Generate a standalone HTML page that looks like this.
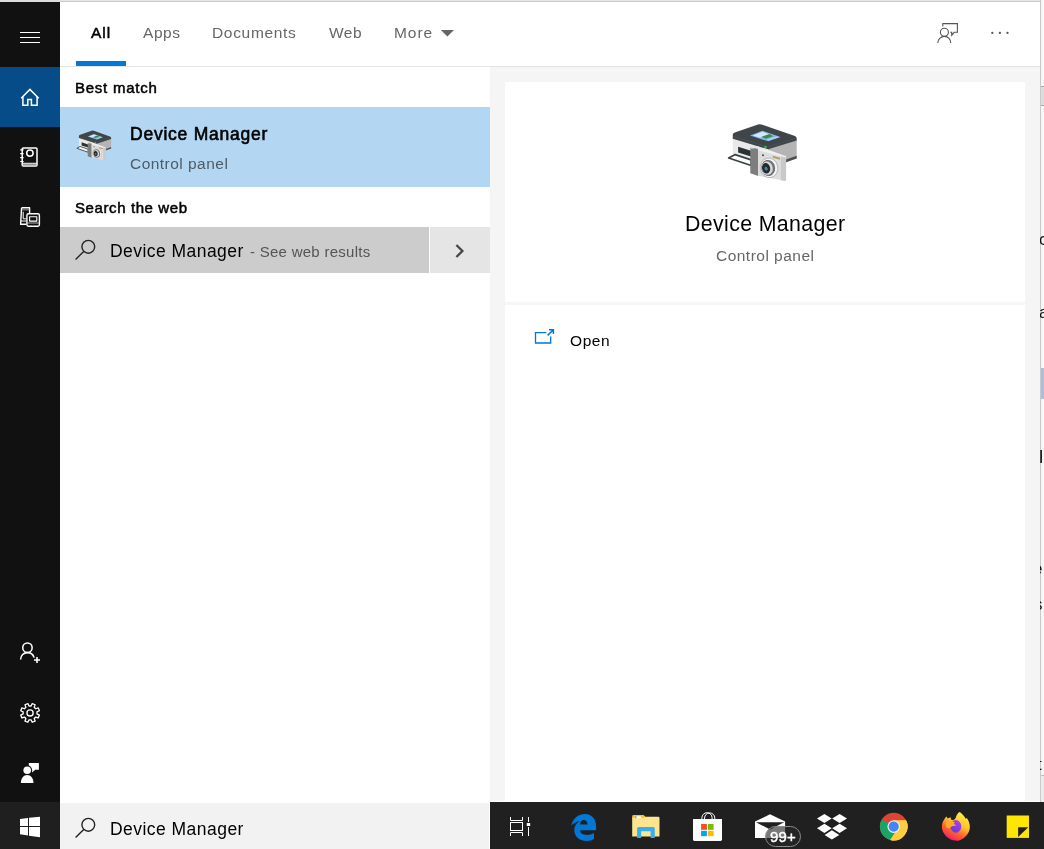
<!DOCTYPE html>
<html lang="en">
<head>
<meta charset="utf-8">
<title>Search - Device Manager</title>
<style>
*{box-sizing:border-box;margin:0;padding:0}
html,body{width:1044px;height:849px;overflow:hidden;background:#fff;font-family:"Liberation Sans",sans-serif;}
body{position:relative}
.b{position:absolute}
.t{position:absolute;white-space:nowrap;line-height:20px;height:20px;color:#000;will-change:transform}
.sb{font-weight:bold}
.sw{-webkit-text-stroke:0.45px #fff}
.sm{-webkit-text-stroke:0.5px #000}
.g{color:#666}
#icons{position:absolute;left:0;top:0;width:1044px;height:849px;pointer-events:none}
#edge{position:absolute;left:1040px;top:0;width:4px;height:802px;overflow:hidden;background:#f6f6f6}
#edge .t{font-size:17px;color:#111}
</style>
</head>
<body>
<!-- window chrome -->
<div class="b" style="left:0;top:0;width:60px;height:2px;background:#dcdcdc"></div>
<div class="b" style="left:60px;top:0;width:980px;height:1px;background:#e6e6e6"></div>
<div class="b" style="left:60px;top:1px;width:980px;height:1px;background:#cacaca"></div>
<!-- sidebar -->
<div class="b" style="left:0;top:2px;width:60px;height:800px;background:#111111"></div>
<div class="b" style="left:0;top:67px;width:60px;height:60px;background:#054c88"></div>
<!-- header -->
<div class="b" style="left:60px;top:2px;width:980px;height:65px;background:#fff;border-bottom:1px solid #e4e4e4"></div>
<div class="b" style="left:76px;top:61px;width:50px;height:5px;background:#0078d7"></div>
<div class="t sm" id="t_all" style="left:91.0px;top:23px;font-size:15.5px;letter-spacing:1.0px">All</div>
<div class="t g" id="t_apps" style="left:142.8px;top:23px;font-size:15.5px;letter-spacing:0.54px">Apps</div>
<div class="t g" id="t_docs" style="left:211.8px;top:23px;font-size:15.5px;letter-spacing:0.68px">Documents</div>
<div class="t g" id="t_web" style="left:329.0px;top:23px;font-size:15.5px;letter-spacing:0.5px">Web</div>
<div class="t g" id="t_more" style="left:394.3px;top:23px;font-size:15.5px;letter-spacing:0.95px">More</div>
<!-- results list -->
<div class="b" style="left:60px;top:67px;width:430px;height:736px;background:#fff"></div>
<div class="t sm" id="t_best" style="left:75.4px;top:78px;font-size:15px;letter-spacing:0.75px">Best match</div>
<div class="b" style="left:60px;top:107px;width:430px;height:80px;background:#b3d7f3"></div>
<div class="t sm" id="t_dm1" style="left:130.0px;top:124px;font-size:17.5px;letter-spacing:0.76px;-webkit-text-stroke:0.6px #000">Device Manager</div>
<div class="t" id="t_cp1" style="left:129.6px;top:154px;font-size:15.5px;color:#4f5a64;letter-spacing:0.47px">Control panel</div>
<div class="t sm" id="t_stw" style="left:75.4px;top:198px;font-size:15px;letter-spacing:0.6px">Search the web</div>
<div class="b" style="left:60px;top:227px;width:369px;height:46px;background:#cccccc"></div>
<div class="b" style="left:430px;top:227px;width:60px;height:46px;background:#e5e5e5"></div>
<div class="t" id="t_dm2" style="left:110.2px;top:241px;font-size:17.5px;letter-spacing:0.45px">Device Manager</div>
<div class="t" id="t_swr" style="left:249.6px;top:242px;font-size:15px;color:#555;letter-spacing:0.27px">- See web results</div>
<!-- preview pane -->
<div class="b" style="left:490px;top:67px;width:550px;height:734px;background:#f5f5f5"></div>
<div class="b" style="left:505px;top:82px;width:520px;height:220px;background:#fff"></div>
<div class="b" style="left:505px;top:303px;width:520px;height:1px;background:#f8f8f8"></div>
<div class="b" style="left:505px;top:305px;width:520px;height:497px;background:#fff"></div>
<div class="t" id="t_dm3" style="left:685.2px;top:211px;font-size:21.33px;line-height:26px;height:26px;letter-spacing:0.37px">Device Manager</div>
<div class="t g" id="t_cp2" style="left:716.4px;top:246px;font-size:15.5px;letter-spacing:0.48px">Control panel</div>
<div class="t" id="t_open" style="left:569.8px;top:331px;font-size:15.5px;letter-spacing:0.59px">Open</div>
<!-- right edge of underlying window -->
<div class="b" style="left:1040px;top:0;width:4px;height:802px;background:#f6f6f6"></div>
<div id="edge">
<div class="b" style="left:0;top:0;width:1px;height:802px;background:#c9c9c9"></div>
<div class="b" style="left:1px;top:86px;width:3px;height:20px;background:#dcdcdc;border-top:1px solid #a8a8a8;border-bottom:1px solid #a8a8a8"></div>
<div class="b" style="left:1px;top:368px;width:3px;height:31px;background:#a9bfe2"></div>
<div class="b" style="left:1px;top:775px;width:3px;height:27px;background:#ececec;border-top:1px solid #bdbdbd"></div>
<div class="t" style="left:-1px;top:230px">c</div>
<div class="t" style="left:-1px;top:303px">a</div>
<div class="t" style="left:-1px;top:447px;font-size:19px">l</div>
<div class="t" style="left:-7px;top:559px">e</div>
<div class="t" style="left:-6px;top:595px">s</div>
<div class="t" style="left:-3px;top:755px">t</div>
</div>
<!-- taskbar -->
<div class="b" style="left:0;top:802px;width:1044px;height:47px;background:#202020"></div>
<div class="b" style="left:0;top:802px;width:60px;height:47px;background:#1f1f1f"></div>
<div class="b" style="left:60px;top:802px;width:430px;height:47px;background:#f2f2f2;border-top:1px solid #fff;border-right:1px solid #fff"></div>
<div class="t" id="t_dm4" style="left:110.0px;top:819px;font-size:17.5px;letter-spacing:0.46px">Device Manager</div>
<svg id="icons" width="1044" height="849" viewBox="0 0 1044 849">
<filter id="bla" x="-10%" y="-10%" width="120%" height="120%"><feGaussianBlur stdDeviation="0.45"/></filter>
<filter id="blb" x="-10%" y="-10%" width="120%" height="120%"><feGaussianBlur stdDeviation="0.7"/></filter>
<linearGradient id="ffg" x1="0.78" y1="0.08" x2="0.3" y2="1"><stop offset="0" stop-color="#ffec3f"/><stop offset="0.38" stop-color="#ffc230"/><stop offset="0.66" stop-color="#ff642c"/><stop offset="0.85" stop-color="#fb3a4c"/><stop offset="1" stop-color="#e31587"/></linearGradient>
<linearGradient id="ffp" x1="0.8" y1="0" x2="0.2" y2="1"><stop offset="0" stop-color="#b53cf0"/><stop offset="1" stop-color="#5a3fd0"/></linearGradient>

<!-- hamburger -->
<g fill="#fff"><rect x="20" y="32" width="20" height="1"/><rect x="20" y="37" width="20" height="1"/><rect x="20" y="42" width="20" height="1"/></g>
<!-- home -->
<g fill="none" stroke="#fff" stroke-width="1.5" stroke-linejoin="miter">
<path d="M21.2,98.2 L29.9,89.4 L38.7,98.2"/>
<path d="M22.9,97 V105.2 H27.8 V99.4 H31.4 V105.2 H37.1 V97"/>
</g>
<!-- notebook -->
<g fill="none" stroke="#fff" stroke-width="1.5">
<rect x="22.2" y="147.9" width="14.8" height="18.1" rx="1"/>
<path d="M22,163.3 H37" stroke-width="1"/>
<path d="M22.5,164.8 H36.5" stroke="#bbb" stroke-width="1.2"/>
<circle cx="29.9" cy="153.1" r="3.2"/>
<path d="M20.2,149.8 H23.6 M20.2,153.7 H23.6 M20.2,157.7 H23.6 M20.2,161.5 H23.6" stroke-width="1.2"/>
</g>
<!-- devices -->
<g fill="none" stroke="#fff" stroke-width="1.4" stroke-linejoin="round">
<path d="M21.6,207.8 H29.6 V213 M26.2,224.2 H20.6 L21.6,207.8"/>
<path d="M21.8,209.8 H29.4" stroke="#aaa" stroke-width="0.9"/>
<path d="M23.2,211.8 V218.8 H26" stroke-width="1"/>
<path d="M21,221 H26" stroke-width="1"/>
<rect x="26.9" y="213.8" width="12.5" height="12.4" rx="1.6" stroke-width="1.4"/>
<rect x="29.6" y="216.7" width="7.2" height="4.4" stroke-width="1.1"/>
<path d="M27.5,223 H39" stroke="#ddd" stroke-width="0.8"/>
</g>
<!-- add user -->
<g fill="none" stroke="#fff" stroke-width="1.55" stroke-linecap="butt">
<circle cx="27.45" cy="647.7" r="4.7"/>
<path d="M20.6,659.5 C20.6,655.5 23.6,652.6 27.45,652.6 C30.6,652.6 33.2,654.6 34.1,657.6"/>
<path d="M34,660 H40 M37,657 V663" stroke-width="1.6"/>
</g>
<!-- settings gear -->
<g fill="none" stroke="#fff" stroke-width="1.3" stroke-linejoin="round">
<path d="M31.09,705.98 L32.22,703.55 L35.13,704.75 L34.21,707.27 L35.68,708.74 L38.20,707.82 L39.40,710.73 L36.97,711.86 L36.97,713.94 L39.40,715.07 L38.20,717.98 L35.68,717.06 L34.21,718.53 L35.13,721.05 L32.22,722.25 L31.09,719.82 L29.01,719.82 L27.88,722.25 L24.97,721.05 L25.89,718.53 L24.42,717.06 L21.90,717.98 L20.70,715.07 L23.13,713.94 L23.13,711.86 L20.70,710.73 L21.90,707.82 L24.42,708.74 L25.89,707.27 L24.97,704.75 L27.88,703.55 L29.01,705.98Z"/>
<circle cx="30.05" cy="712.9" r="3.1"/>
</g>
<!-- feedback (filled) -->
<g fill="#fff">
<path d="M28.8,763.1 H38.9 V769.8 H35.2 L32.1,772.5 V769.8 H28.8 Z"/>
<circle cx="27.2" cy="770.2" r="4.9" fill="#111"/>
<circle cx="27.2" cy="770.2" r="3.8"/>
<path d="M20.9,783 C20.9,778.4 23.6,775 27.2,775 C30.8,775 33.5,778.4 33.5,783 Z"/>
</g>
<!-- windows logo -->
<g fill="#fff">
<polygon points="20,819.1 28,818 28,826 20,826"/>
<polygon points="29,817.85 40,816.7 40,826 29,826"/>
<polygon points="20,827 28,827 28,835.5 20,834.2"/>
<polygon points="29,827 40,827 40,837.2 29,835.65"/>
</g>
<!-- search icons -->
<g fill="none" stroke="#222" stroke-width="1.4">
<circle cx="88.3" cy="246.8" r="6.4"/><path d="M83.7,251.4 L75.6,259.5"/>
<circle cx="88.3" cy="824.8" r="6.4"/><path d="M83.7,829.4 L75.6,837.5"/>
</g>
<!-- chevron -->
<path d="M456.4,245 L462.4,251 L456.4,257" fill="none" stroke="#474747" stroke-width="2.3"/>
<!-- more triangle -->
<polygon points="440.8,30 454,30 447.4,36.6" fill="#666"/>
<!-- open icon -->
<g fill="none" stroke="#0078d7" stroke-width="1.3">
<path d="M546.3,332.6 H535.5 V343 H550.7 V336.4"/>
<path d="M547.6,335.4 L553.4,329.7 M549,329.7 H553.4 V334.1" stroke-width="1.5"/>
</g>
<!-- feedback outline (header) -->
<g fill="none" stroke="#555" stroke-width="1.1">
<path d="M942.8,26.4 V23.6 H957.4 V32.3 H954.3 L951.7,35.2 V32.3 H950.3"/>
<circle cx="944.4" cy="32.3" r="4"/>
<path d="M937.8,43 C937.8,39.2 940.7,36.4 944.4,36.4 C948.1,36.4 950.8,39.2 950.8,43"/>
</g>
<g fill="#555"><circle cx="992.3" cy="32.9" r="1.15"/><circle cx="999.9" cy="32.9" r="1.15"/><circle cx="1007.5" cy="32.9" r="1.15"/></g>

<g transform="translate(720,115) scale(1,1)" filter="url(#bla)">
<polygon points="12.81,22.08 48.14,33.13 48.14,53.89 12.81,38.87" fill="#e9e9e9"/>
<polygon points="48.14,33.13 76.68,24.73 76.68,43.29 48.14,53.89" fill="#b4b4b4"/>
<polygon points="61.84,45.94 76.68,40.81 76.68,43.46 61.84,48.76" fill="#4a5054"/>
<polygon points="18.11,31.63 30.92,35.78 30.92,41.52 18.11,37.54" fill="#2c3033"/>
<polygon points="8.66,43.02 15.19,39.58 31.10,44.88 31.10,50.53" fill="#fbfbfb" stroke="#3a4145" stroke-width="1.7" stroke-linejoin="round"/>
<path d="M12.81,19.43 Q12.81,18.11 15.46,17.23 L37.99,9.54 Q40.19,9.01 42.40,9.72 L74.20,20.76 Q76.68,21.64 76.68,23.41 L76.68,25.62 L48.14,34.28 L12.81,23.67 Z" fill="#3f4548"/>
<path d="M12.81,21.20 L48.14,31.98 L76.68,23.14" fill="none" stroke="#565d61" stroke-width="0.5"/>
<polygon points="30.04,20.49 42.40,15.72 60.51,22.08 48.14,26.33" fill="#7fb6ee"/>
<polygon points="32.69,20.49 42.40,16.78 49.47,19.26 39.75,22.79" fill="#d5e8fb"/>
<polygon points="41.52,21.64 49.47,18.99 53.00,21.20 45.94,23.67" fill="#3e8a45"/>
<polygon points="46.82,24.29 56.54,21.20 59.36,22.26 48.41,25.80" fill="#a9cdf3"/>
<circle cx="45.49" cy="31.98" r="1.3" fill="#22c43a"/>
<path d="M30.30,33.57 Q30.30,31.98 32.24,31.98 L38.16,34.01 L38.16,60.95 L30.30,58.30 Z" fill="#7e7e7e"/>
<path d="M30.92,32.51 Q34.89,29.86 39.75,31.98 L39.31,33.75 Q34.89,32.86 31.10,33.75 Z" fill="#e4e4e4"/>
<polygon points="38.16,34.01 66.08,41.34 66.08,66.08 38.16,60.78" fill="#dddddd"/>
<polygon points="60.95,40.19 66.08,41.34 66.08,66.08 60.95,65.19" fill="#c9c9c9"/>
<polygon points="38.16,34.01 49.47,35.34 66.08,41.34 66.08,42.40 38.16,35.34" fill="#f1f1f1"/>
<polygon points="52.83,40.81 60.07,42.76 60.07,44.70 52.83,42.76" fill="#b59a62"/>
<circle cx="43.02" cy="40.19" r="1.0" fill="#444"/>
<ellipse cx="49.03" cy="52.83" rx="8.83" ry="9.89" fill="#f4f4f4" stroke="#9a9a9a" stroke-width="0.6" transform="rotate(-12 49.03 52.83)"/>
<ellipse cx="48.14" cy="53.00" rx="6.89" ry="8.13" fill="#6f7376" transform="rotate(-12 48.14 53.00)"/>
<ellipse cx="47.26" cy="53.18" rx="5.48" ry="6.71" fill="#d9d9d9" transform="rotate(-12 47.26 53.18)"/>
<ellipse cx="46.11" cy="53.27" rx="4.06" ry="5.30" fill="#25292c" transform="rotate(-12 46.11 53.27)"/>
<ellipse cx="46.11" cy="53.71" rx="1.50" ry="1.94" fill="#3f86b0" transform="rotate(-30 46.11 53.71)"/>
</g>
<g transform="translate(72.47040000000001,125.5989) scale(0.504,0.527)" filter="url(#blb)">
<polygon points="12.81,22.08 48.14,33.13 48.14,53.89 12.81,38.87" fill="#e9e9e9"/>
<polygon points="48.14,33.13 76.68,24.73 76.68,43.29 48.14,53.89" fill="#b4b4b4"/>
<polygon points="61.84,45.94 76.68,40.81 76.68,43.46 61.84,48.76" fill="#4a5054"/>
<polygon points="18.11,31.63 30.92,35.78 30.92,41.52 18.11,37.54" fill="#2c3033"/>
<polygon points="8.66,43.02 15.19,39.58 31.10,44.88 31.10,50.53" fill="#fbfbfb" stroke="#3a4145" stroke-width="1.7" stroke-linejoin="round"/>
<path d="M12.81,19.43 Q12.81,18.11 15.46,17.23 L37.99,9.54 Q40.19,9.01 42.40,9.72 L74.20,20.76 Q76.68,21.64 76.68,23.41 L76.68,25.62 L48.14,34.28 L12.81,23.67 Z" fill="#3f4548"/>
<path d="M12.81,21.20 L48.14,31.98 L76.68,23.14" fill="none" stroke="#565d61" stroke-width="0.5"/>
<polygon points="30.04,20.49 42.40,15.72 60.51,22.08 48.14,26.33" fill="#7fb6ee"/>
<polygon points="32.69,20.49 42.40,16.78 49.47,19.26 39.75,22.79" fill="#d5e8fb"/>
<polygon points="41.52,21.64 49.47,18.99 53.00,21.20 45.94,23.67" fill="#3e8a45"/>
<polygon points="46.82,24.29 56.54,21.20 59.36,22.26 48.41,25.80" fill="#a9cdf3"/>
<circle cx="45.49" cy="31.98" r="1.3" fill="#22c43a"/>
<path d="M30.30,33.57 Q30.30,31.98 32.24,31.98 L38.16,34.01 L38.16,60.95 L30.30,58.30 Z" fill="#7e7e7e"/>
<path d="M30.92,32.51 Q34.89,29.86 39.75,31.98 L39.31,33.75 Q34.89,32.86 31.10,33.75 Z" fill="#e4e4e4"/>
<polygon points="38.16,34.01 66.08,41.34 66.08,66.08 38.16,60.78" fill="#dddddd"/>
<polygon points="60.95,40.19 66.08,41.34 66.08,66.08 60.95,65.19" fill="#c9c9c9"/>
<polygon points="38.16,34.01 49.47,35.34 66.08,41.34 66.08,42.40 38.16,35.34" fill="#f1f1f1"/>
<polygon points="52.83,40.81 60.07,42.76 60.07,44.70 52.83,42.76" fill="#b59a62"/>
<circle cx="43.02" cy="40.19" r="1.0" fill="#444"/>
<ellipse cx="49.03" cy="52.83" rx="8.83" ry="9.89" fill="#f4f4f4" stroke="#9a9a9a" stroke-width="0.6" transform="rotate(-12 49.03 52.83)"/>
<ellipse cx="48.14" cy="53.00" rx="6.89" ry="8.13" fill="#6f7376" transform="rotate(-12 48.14 53.00)"/>
<ellipse cx="47.26" cy="53.18" rx="5.48" ry="6.71" fill="#d9d9d9" transform="rotate(-12 47.26 53.18)"/>
<ellipse cx="46.11" cy="53.27" rx="4.06" ry="5.30" fill="#25292c" transform="rotate(-12 46.11 53.27)"/>
<ellipse cx="46.11" cy="53.71" rx="1.50" ry="1.94" fill="#3f86b0" transform="rotate(-30 46.11 53.71)"/>
</g>

<!-- task view -->
<g fill="none" stroke="#fff" stroke-width="1">
<rect x="510.5" y="822.5" width="12" height="8"/>
<path d="M510.5,817 V820.5 H522.5 V817"/>
<path d="M510.5,836 V832.5 H522.5 V836"/>
<path d="M528.5,817 V822 M528.5,827 V836"/>
</g>
<rect x="526.8" y="823" width="3.4" height="3" fill="#fff"/>
<!-- edge -->
<path fill="#0078d7" fill-rule="evenodd" d="M571.2,825.6 C572.5,819.5 577.5,814 585,814 C592,814 596.1,819.3 596.1,826.2 L596.1,830.2 L580.1,830.2 C580.3,833 582.8,834.9 586.9,834.9 C589.6,834.9 592,834.2 594,833 L594,838.9 C592,840.1 589.5,840.9 586.3,840.9 C579.3,840.9 574.3,836.6 574.3,830 C574.3,826.2 576.5,822.6 580.4,821 C577,821.3 573.8,823 571.2,825.6 Z M580.1,824.4 C580.3,821.8 581.6,820.1 583.6,820.1 C586,820.1 587.5,821.8 587.6,824.4 Z"/>
<!-- file explorer -->
<path d="M632.2,816.4 Q632.2,815 633.6,815 H643.6 L645.4,816.8 H645.4 V819 H632.2 Z" fill="#f5c23b"/>
<path d="M632.2,817.8 H644 L645.4,816.8 H658.4 Q659.5,816.8 659.5,817.9 V836.5 H632.2 Z" fill="#ffe48f"/>
<rect x="635.4" y="816.3" width="5.5" height="1.8" fill="#fff"/>
<rect x="635.2" y="816.3" width="1.2" height="1.8" fill="#2a9ee6"/>
<path d="M637.1,837.9 V828.6 Q637.1,827.1 638.6,827.1 H653.3 Q654.8,827.1 654.8,828.6 V837.9 H650.6 V831.3 H641.2 V837.9 Z" fill="#38b0ea"/>
<!-- store -->
<g fill="none" stroke="#fff" stroke-width="1">
<path d="M701.9,819.5 V817.8 A5.1,5.1 0 0 1 712.1,817.8 V819.5"/>
<path d="M704.6,819.5 V818 A5.1,5.1 0 0 1 714.8,818 V819.5"/>
</g>
<path d="M693,819 H722 V839.6 Q722,841 720.6,841 H694.4 Q693,841 693,839.6 Z" fill="#fff"/>
<rect x="701.1" y="824" width="5.8" height="5.8" fill="#f25022"/>
<rect x="708" y="824" width="5.6" height="5.8" fill="#7fba00"/>
<rect x="701.1" y="830.8" width="5.8" height="5.4" fill="#00a4ef"/>
<rect x="708" y="830.8" width="5.6" height="5.4" fill="#ffb900"/>
<!-- mail -->
<path d="M755,821.6 L770,814.2 L785.1,821.6 V837.9 H755 Z" fill="#fff"/>
<path d="M756,822.2 H784.2 L770,829.6 Z" fill="#202020"/>
<!-- dropbox -->
<g fill="#fff">
<polygon points="817,818.5 824.4,814 831.7,818.5 824.4,823.1"/>
<polygon points="832.2,818.5 839.6,814 847,818.5 839.6,823.1"/>
<polygon points="817,828.3 824.4,823.8 831.7,828.3 824.4,832.9"/>
<polygon points="832.2,828.3 839.6,823.8 847,828.3 839.6,832.9"/>
<polygon points="824.6,834.9 831.9,830.3 839.3,834.9 831.9,839.5"/>
</g>
<!-- chrome -->
<g filter="url(#bla)">
<circle cx="893.7" cy="826.6" r="13.8" fill="#db4437"/>
<path d="M893.7,826.6 L881.75,819.7 A13.8,13.8 0 0 0 890.2,839.95 L896.9,832.1 Z" fill="#1da462"/>
<path d="M893.7,826.6 L899.2,820.4 L906.05,820.4 A13.8,13.8 0 0 1 890.2,839.95 L897.5,828.5 Z" fill="#ffcd40"/>
<path d="M881.75,819.7 L887.9,829.8 L893.7,826.6 Z" fill="#1da462"/>
<path d="M893.7,820.3 H906.05 A13.8,13.8 0 0 1 890.2,839.95 L899.2,829.8 Z" fill="#ffcd40"/>
<circle cx="893.7" cy="826.6" r="6.3" fill="#f1f1f1"/>
<circle cx="893.7" cy="826.6" r="5.1" fill="#4285f4"/>
</g>
<!-- firefox -->
<g filter="url(#bla)">
<path d="M959.8,812 C961.2,813 962.2,814 963,815 C964,816 964.8,817.2 965.4,818.4 L967,818.2 C968,819.4 968.6,820.8 969,822.2 C969.6,823.8 969.9,825.4 969.8,827 C969.8,829 969.4,830.6 968.6,832.2 C967.8,834 966.6,835.6 965,837 C963.6,838.4 961.8,839.4 959.8,840.2 C958.2,840.7 956.6,840.9 955,840.6 C952.8,840.4 950.8,839.8 949,838.6 C947,837.4 945.4,835.8 944.2,833.8 C943,832 942.3,830.2 942,828.2 C941.8,826.8 941.9,825.2 942.2,823.8 C942.6,822.2 943.2,820.8 944.2,819.4 C944.8,818.4 945.6,817.4 946.6,816.6 L947.6,818.6 L950.6,817.2 L951,819.4 L953,820.2 L955,819 C955.6,818.2 956,817.2 956.2,816.2 C956.6,815.2 957.2,814.2 957.8,813.4 C958.4,812.8 959,812.4 959.8,812 Z" fill="url(#ffg)"/>
<ellipse cx="955.9" cy="826.4" rx="5.4" ry="6.3" fill="url(#ffp)"/>
<path d="M946.2,822.4 C948.8,820.4 952.6,820.6 955,822.6 L953.6,824 C955.2,824.4 956,825.2 956.2,826 C953.8,825.4 951.4,826 949.6,828 C948,828.6 946.8,828 946.2,826.6 C945.8,825.2 945.8,823.8 946.2,822.4 Z" fill="#ffab2e"/>
</g>
<!-- sticky notes -->
<rect x="1006.7" y="815.5" width="22.3" height="22.4" fill="#ffe600"/>
<polygon points="1018.1,827.3 1028.3,827.3 1018.1,837.1" fill="#202020"/>
</svg>

<div class="b" id="badge" style="left:765px;top:826px;width:36px;height:21px;border-radius:10.5px;background:rgba(38,38,38,0.62);border:1px solid #8c8c8c"></div>
<div class="t sw" id="t_99" style="left:769.8px;top:827px;font-size:15px;color:#fff;letter-spacing:0.1px">99+</div>
</body>
</html>
